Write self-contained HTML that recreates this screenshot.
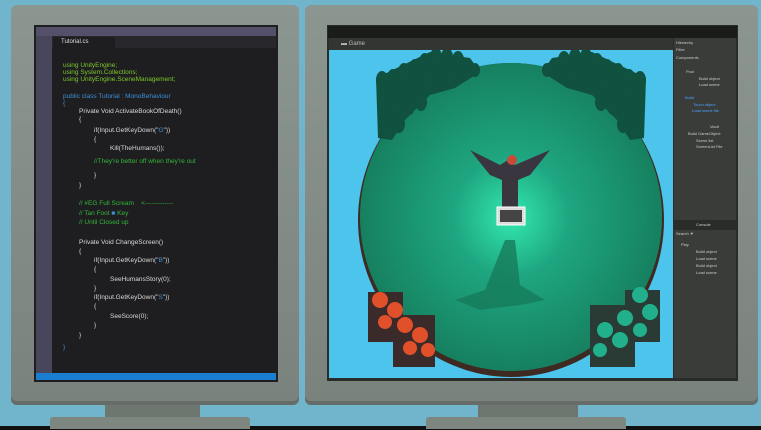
<!DOCTYPE html>
<html><head><style>
body{margin:0;width:761px;height:430px;overflow:hidden;background:#70b5cc;position:relative;font-family:"Liberation Sans",sans-serif}
.a{position:absolute}
.code div{position:absolute;font-size:6.5px;white-space:nowrap;color:#d8d8d8;font-family:"Liberation Sans",sans-serif}
.g{color:#7cc92a!important}.b{color:#3a8fd8!important}.c{color:#35b53a!important}
.side div{position:absolute;font-size:4px;color:#ccc;white-space:nowrap}
.mon{background:linear-gradient(#8c9690,#7a827d);border-radius:6px;box-shadow:inset 0 -4px 0 #666d68}
</style></head><body>
<div class="a" style="left:0;top:426px;width:761px;height:4px;background:#111"></div>
<div class="a" style="left:105px;top:403px;width:95px;height:16px;background:#6e7670"></div>
<div class="a" style="left:50px;top:417px;width:200px;height:12px;background:#7e8680;border-radius:3px 3px 0 0"></div>
<div class="a mon" style="left:11px;top:5px;width:288px;height:400px"></div>
<div class="a" style="left:34px;top:25px;width:244px;height:357px;background:#1e1e20"></div>
<div class="a" style="left:36px;top:27px;width:240px;height:9px;background:#54506a"></div>
<div class="a" style="left:36px;top:36px;width:16px;height:337px;background:#48465a"></div>
<div class="a" style="left:52px;top:36px;width:224px;height:12px;background:#28282c"></div>
<div class="a" style="left:53px;top:37px;width:62px;height:11px;background:#1e1e20;color:#ddd;font-size:6px;line-height:11px;padding-left:8px;box-sizing:border-box">Tutorial.cs</div>
<div class="a" style="left:36px;top:373px;width:240px;height:7px;background:#1a7fd0"></div>
<div class="a code" style="left:0;top:0">
<div class="g" style="left:63px;top:62px">using UnityEngine;</div>
<div class="g" style="left:63px;top:69px">using System.Collections;</div>
<div class="g" style="left:63px;top:76px">using UnityEngine.SceneManagement;</div>
<div class="b" style="left:63px;top:93px">public class Tutorial : MonoBehaviour</div>
<div class="b" style="left:63px;top:100px">{</div>
<div style="left:79px;top:108px">Private Void ActivateBookOfDeath()</div>
<div style="left:79px;top:116px">{</div>
<div style="left:94px;top:127px">if(Input.GetKeyDown("<span class="b">G</span>"))</div>
<div style="left:94px;top:136px">{</div>
<div style="left:110px;top:145px">Kill(TheHumans());</div>
<div class="c" style="left:94px;top:158px">//They're better off when they're out</div>
<div style="left:94px;top:172px">}</div>
<div style="left:79px;top:182px">}</div>
<div class="c" style="left:79px;top:200px">// #EG Full Scream &nbsp;&nbsp;&nbsp;&lt;-------------</div>
<div class="c" style="left:79px;top:210px">// Tan Foot <span class="b">■</span> Key</div>
<div class="c" style="left:79px;top:219px">// Until Closed up</div>
<div style="left:79px;top:239px">Private Void ChangeScreen()</div>
<div style="left:79px;top:248px">{</div>
<div style="left:94px;top:257px">if(Input.GetKeyDown("<span class="b">B</span>"))</div>
<div style="left:94px;top:266px">{</div>
<div style="left:110px;top:276px">SeeHumansStory(0);</div>
<div style="left:94px;top:285px">}</div>
<div style="left:94px;top:294px">if(Input.GetKeyDown("<span class="b">S</span>"))</div>
<div style="left:94px;top:303px">{</div>
<div style="left:110px;top:313px">SeeScore(0);</div>
<div style="left:94px;top:322px">}</div>
<div style="left:79px;top:332px">}</div>
<div class="b" style="left:63px;top:344px">}</div>
</div>
<div class="a" style="left:478px;top:403px;width:100px;height:16px;background:#6e7670"></div>
<div class="a" style="left:426px;top:417px;width:200px;height:12px;background:#7e8680;border-radius:3px 3px 0 0"></div>
<div class="a mon" style="left:305px;top:5px;width:453px;height:400px"></div>
<div class="a" style="left:327px;top:25px;width:411px;height:356px;background:#2a2c2a"></div>
<div class="a" style="left:328px;top:26px;width:409px;height:12px;background:#1a1c1a"></div>
<div class="a" style="left:329px;top:38px;width:344px;height:12px;background:#333533;color:#bbb;font-size:6px;line-height:12px;padding-left:12px;box-sizing:border-box">▬ Game</div>
<div class="a" style="left:329px;top:50px;width:344px;height:328px;background:#4cc4ec"></div>
<div class="a" style="left:674px;top:38px;width:62px;height:340px;background:#3a3c3a"></div>
<div class="a" style="left:674px;top:220px;width:62px;height:10px;background:#2a2c2a"></div>
<div class="a side" style="left:0;top:0">
<div style="left:676px;top:40px">Hierarchy</div><div style="left:676px;top:47px">Filter</div>
<div style="left:676px;top:55px">Components</div>
<div style="left:686px;top:69px">Pool</div><div style="left:699px;top:76px">Build object</div><div style="left:699px;top:82px">Load scene</div>
<div style="left:685px;top:95px;color:#4aa0ff">Build</div><div style="left:693px;top:102px;color:#4aa0ff">Touch object</div><div style="left:692px;top:108px;color:#4aa0ff">Load scene file</div>
<div style="left:710px;top:124px">Vault</div><div style="left:688px;top:131px">Build GameObject</div><div style="left:696px;top:138px">Scene list</div><div style="left:696px;top:144px">ScreenList File</div>
<div style="left:696px;top:222px">Console</div><div style="left:676px;top:231px">Search ▼</div>
<div style="left:681px;top:242px">Play</div><div style="left:696px;top:249px">Build object</div><div style="left:696px;top:256px">Load scene</div><div style="left:696px;top:263px">Build object</div><div style="left:696px;top:270px">Load scene</div>
</div>
<svg class="a" style="left:329px;top:50px" width="344" height="328" viewBox="329 50 344 328">
<defs>
<radialGradient id="r" cx="0.5" cy="0.5" r="0.55"><stop offset="0" stop-color="#33e8b0"/><stop offset="0.35" stop-color="#1ea680"/><stop offset="1" stop-color="#157a5a"/></radialGradient>
<g id="tl">
<path d="M376 78 L430 52 L470 58 L480 72 L455 88 L430 95 L405 120 L392 140 L378 138Z"/>
<ellipse cx="382" cy="80" rx="6" ry="9"/><ellipse cx="393" cy="78" rx="6" ry="9"/><ellipse cx="404" cy="72" rx="6" ry="9"/><ellipse cx="415" cy="68" rx="6" ry="9"/><ellipse cx="425" cy="62" rx="6" ry="9"/><ellipse cx="436" cy="57" rx="6" ry="9"/><ellipse cx="447" cy="57" rx="6" ry="9"/><ellipse cx="458" cy="60" rx="6" ry="9"/><ellipse cx="467" cy="66" rx="5" ry="7"/><ellipse cx="475" cy="70" rx="5" ry="7"/>
<ellipse cx="383" cy="98" rx="6" ry="9"/><ellipse cx="394" cy="94" rx="6" ry="9"/><ellipse cx="406" cy="89" rx="6" ry="9"/><ellipse cx="417" cy="84" rx="6" ry="9"/><ellipse cx="428" cy="80" rx="6" ry="9"/><ellipse cx="440" cy="80" rx="6" ry="9"/><ellipse cx="451" cy="78" rx="6" ry="9"/>
<ellipse cx="384" cy="116" rx="6" ry="9"/><ellipse cx="396" cy="112" rx="6" ry="9"/><ellipse cx="409" cy="106" rx="6" ry="9"/><ellipse cx="421" cy="102" rx="6" ry="9"/>
<ellipse cx="387" cy="130" rx="6" ry="9"/><ellipse cx="399" cy="124" rx="6" ry="9"/>
</g>
</defs>
<ellipse cx="511" cy="220" rx="153" ry="157" fill="#3e2a22"/>
<ellipse cx="511" cy="217" rx="151" ry="154" fill="url(#r)"/>
<path d="M505 240 L485 290 L455 300 L480 310 L520 305 L545 300 L520 285 L515 240Z" fill="#167a5a" opacity="0.8"/>
<path d="M470 150 L500 165 L508 160 L515 165 L550 150 L530 175 L518 180 L518 208 L502 208 L502 180 L490 175Z" fill="#3a3640"/>
<rect x="497" y="207" width="28" height="18" fill="#ddd" stroke="#fff"/>
<rect x="500" y="210" width="22" height="12" fill="#444"/>
<circle cx="512" cy="160" r="5" fill="#c84a3a"/>
<use href="#tl" fill="#11513f"/>
<use href="#tl" fill="#11513f" transform="translate(1022 0) scale(-1 1)"/>
<rect x="368" y="292" width="35" height="50" fill="#3a2a2a"/>
<rect x="393" y="315" width="42" height="52" fill="#3a2a2a"/>
<g fill="#e0502a"><circle cx="380" cy="300" r="8"/><circle cx="395" cy="310" r="8"/><circle cx="405" cy="325" r="8"/><circle cx="420" cy="335" r="8"/><circle cx="410" cy="348" r="7"/><circle cx="428" cy="350" r="7"/><circle cx="385" cy="322" r="7"/></g>
<rect x="590" y="305" width="45" height="62" fill="#2a3a34"/>
<rect x="625" y="290" width="35" height="52" fill="#2a3a34"/>
<g fill="#22b08c"><circle cx="640" cy="295" r="8"/><circle cx="650" cy="312" r="8"/><circle cx="625" cy="318" r="8"/><circle cx="605" cy="330" r="8"/><circle cx="620" cy="340" r="8"/><circle cx="640" cy="330" r="7"/><circle cx="600" cy="350" r="7"/></g>
</svg>
</body></html>
